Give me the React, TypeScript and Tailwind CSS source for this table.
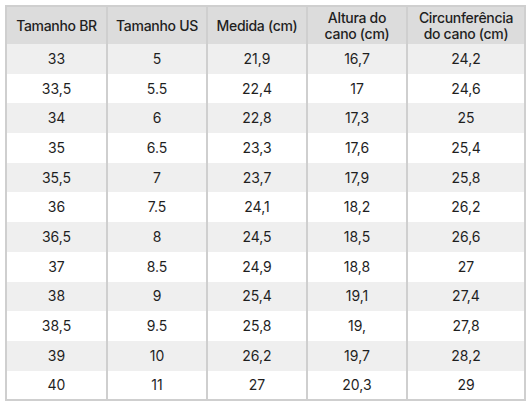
const headers = ["Tamanho BR", "Tamanho US", "Medida (cm)", "Altura do cano (cm)", "Circunferência do cano (cm)"]

const rows = [
  ["33", "5", "21,9", "16,7", "24,2"],
  ["33,5", "5.5", "22,4", "17", "24,6"],
  ["34", "6", "22,8", "17,3", "25"],
  ["35", "6.5", "23,3", "17,6", "25,4"],
  ["35,5", "7", "23,7", "17,9", "25,8"],
  ["36", "7.5", "24,1", "18,2", "26,2"],
  ["36,5", "8", "24,5", "18,5", "26,6"],
  ["37", "8.5", "24,9", "18,8", "27"],
  ["38", "9", "25,4", "19,1", "27,4"],
  ["38,5", "9.5", "25,8", "19,", "27,8"],
  ["39", "10", "26,2", "19,7", "28,2"],
  ["40", "11", "27", "20,3", "29"],
]

const widths = ["w-[101px]", "w-[100px]", "w-[100px]", "w-[100px]", "w-[118px]"]

export default function App() {
  return (
    <div className="bg-white w-[530px] h-[410px] p-[5px] font-['Inter',sans-serif] text-[#1f1f1f]">
      <table className="w-[519px] border-collapse border-2 border-[#cfcfcf] table-fixed">
        <thead>
          <tr className="bg-[#dcdcdc] h-[38px]">
            {headers.map((h, i) => (
              <th
                key={h}
                className={`${widths[i]} border-x-2 border-[#cfcfcf] px-0 text-[14px] leading-[16px] font-medium text-center whitespace-nowrap tracking-[-0.3px]`}
              >
                {i === 3 ? (
                  <>Altura do<br />cano (cm)</>
                ) : i === 4 ? (
                  <>Circunferência<br />do cano (cm)</>
                ) : (
                  h
                )}
              </th>
            ))}
          </tr>
        </thead>
        <tbody>
          {rows.map((r, ri) => (
            <tr key={ri} className={ri % 2 === 0 ? "bg-[#efefef] h-[29.7px]" : "bg-white h-[29.7px]"}>
              {r.map((c, ci) => (
                <td key={ci} className="border-x-2 border-[#cfcfcf] text-center text-[14px] leading-[16px] p-0">
                  {c}
                </td>
              ))}
            </tr>
          ))}
        </tbody>
      </table>
    </div>
  )
}
